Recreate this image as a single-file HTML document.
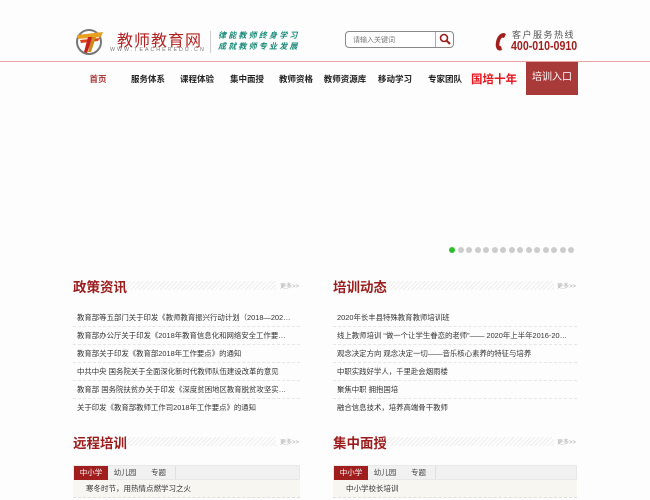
<!DOCTYPE html>
<html><head><meta charset="utf-8"><style>
*{margin:0;padding:0;box-sizing:border-box}
body{width:650px;height:500px;overflow:hidden;background:#fdfdfd;font-family:"Liberation Sans","Noto Sans CJK SC",sans-serif;position:relative;color:#333}
.a{position:absolute;white-space:nowrap}
.nav{position:absolute;top:73px;font-size:8.5px;font-weight:bold;color:#222;transform:translateX(-50%);white-space:nowrap}
.h2{position:absolute;font-size:13.5px;font-weight:bold;color:#9b1c1c}
.hatch{position:absolute;height:9px;background:repeating-linear-gradient(135deg,#eee 0 1px,#fdfdfd 1px 3px)}
.more{position:absolute;font-size:6px;color:#aaa}
.li{position:absolute;font-size:7.4px;color:#333;height:18px;line-height:18px;border-bottom:1px dashed #e6e6e6;padding-left:4px;padding-right:8px;overflow:hidden;text-overflow:ellipsis;white-space:nowrap}
.dot{position:absolute;top:247px;width:6px;height:6px;border-radius:50%;background:#ccc}
.tabs{position:absolute;top:465px;height:15px;background:#f1f1f1;border:1px solid #e8e8e8}
.tab{position:absolute;top:0;height:14px;line-height:14px;font-size:7.5px;text-align:center;width:34px;color:#444}
.tab.on{background:#a01e1e;color:#fff}
.row{position:absolute;top:480px;height:18px;line-height:18px;background:#f8f6f1;font-size:7.5px;padding-left:13px;border-bottom:1px dashed #e0e0e0}
</style></head><body>
<svg class="a" style="left:75px;top:28px" width="30" height="28" viewBox="0 0 30 28">
<circle cx="14" cy="14" r="12" fill="none" stroke="#777" stroke-width="2"/>
<path d="M2 7 L28 4 L26 9 L3 11 Z" fill="#e8a020"/>
<path d="M5 12 L25 10 L23 13 L6 15Z" fill="#d9461e"/>
<path d="M13 9 L18 9 L12 25 L9 24Z" fill="#c62020"/>
<path d="M17 9 L21 9 L16 24 L13 24Z" fill="#d08a1a"/>
</svg>
<div class="a" style="left:117px;top:27px;font-size:16px;color:#b22222;letter-spacing:1px">教师教育网</div>
<div class="a" style="left:110px;top:47px;font-size:5.3px;color:#777;letter-spacing:2px">WWW.TEACHEREDU.CN</div>
<div class="a" style="left:210px;top:31px;width:1px;height:22px;background:#ccc"></div>
<div class="a" style="left:218px;top:30px;font-size:8px;color:#1a8a7a;font-weight:bold;letter-spacing:2.2px;font-style:italic;line-height:11px">律能教师终身学习<br>成就教师专业发展</div>
<div class="a" style="left:345px;top:31px;width:109px;height:17px;border:1px solid #888;border-radius:4px;background:#fff"></div>
<div class="a" style="left:353px;top:35px;font-size:7px;color:#777">请输入关键词</div>
<div class="a" style="left:435px;top:32px;width:1px;height:15px;background:#aaa"></div>
<svg class="a" style="left:439px;top:33px" width="12" height="12" viewBox="0 0 12 12"><circle cx="5" cy="5" r="3.5" fill="none" stroke="#9b1c1c" stroke-width="1.6"/><path d="M7.5 7.5 L11 11" stroke="#9b1c1c" stroke-width="2"/></svg>
<svg class="a" style="left:493px;top:31px" width="16" height="22" viewBox="0 0 16 22"><path d="M11 2 C5 2 2 10 3 16 C4 20 7 20 9 19 L8 15 C6 16 6 13 7 10 C8 7 9 6 11 7 L13 3Z" fill="#a01e1e"/></svg>
<div class="a" style="left:512px;top:28px;font-size:9px;color:#555;letter-spacing:1.5px">客户服务热线</div>
<div class="a" style="left:511px;top:39px;font-size:12.5px;font-weight:bold;color:#a01e1e;transform:scaleX(0.85);transform-origin:left">400-010-0910</div>
<div class="a" style="left:0;top:61px;width:650px;height:1px;background:#e8a0a0"></div>
<div class="nav" style="left:98px;color:#a83a3a">首页</div>
<div class="nav" style="left:148px">服务体系</div>
<div class="nav" style="left:197px">课程体验</div>
<div class="nav" style="left:247px">集中面授</div>
<div class="nav" style="left:296px">教师资格</div>
<div class="nav" style="left:345px">教师资源库</div>
<div class="nav" style="left:395px">移动学习</div>
<div class="nav" style="left:445px">专家团队</div>
<div class="nav" style="left:494px;top:71px;font-size:11.5px;color:#e8141c">国培十年</div>
<div class="a" style="left:526px;top:62px;width:52px;height:33px;background:#a83a3a;color:#fff;font-size:10px;text-align:center;line-height:31px">培训入口</div>
<div class="dot" style="left:449px;background:#2bbf2b"></div>
<div class="dot" style="left:457.5px"></div><div class="dot" style="left:466px"></div><div class="dot" style="left:474.5px"></div><div class="dot" style="left:483px"></div><div class="dot" style="left:491.5px"></div><div class="dot" style="left:500px"></div><div class="dot" style="left:508.5px"></div><div class="dot" style="left:517px"></div><div class="dot" style="left:525.5px"></div><div class="dot" style="left:534px"></div><div class="dot" style="left:542.5px"></div><div class="dot" style="left:551px"></div><div class="dot" style="left:559.5px"></div><div class="dot" style="left:568px"></div>
<div class="h2" style="left:73px;top:276px">政策资讯</div><div class="hatch" style="left:126px;top:281px;width:150px"></div><div class="more" style="left:280px;top:281px">更多>></div>
<div class="h2" style="left:333px;top:276px">培训动态</div><div class="hatch" style="left:386px;top:281px;width:168px"></div><div class="more" style="left:557px;top:281px">更多>></div>
<div class="li" style="left:73px;top:309px;width:227px">教育部等五部门关于印发《教师教育振兴行动计划（2018—2022年）》的通知</div>
<div class="li" style="left:73px;top:327px;width:227px">教育部办公厅关于印发《2018年教育信息化和网络安全工作要点》的通知</div>
<div class="li" style="left:73px;top:345px;width:227px">教育部关于印发《教育部2018年工作要点》的通知</div>
<div class="li" style="left:73px;top:363px;width:227px">中共中央 国务院关于全面深化新时代教师队伍建设改革的意见</div>
<div class="li" style="left:73px;top:381px;width:227px">教育部 国务院扶贫办关于印发《深度贫困地区教育脱贫攻坚实施方案》</div>
<div class="li" style="left:73px;top:399px;width:227px;border:0">关于印发《教育部教师工作司2018年工作要点》的通知</div>
<div class="li" style="left:333px;top:309px;width:244px">2020年长丰县特殊教育教师培训班</div>
<div class="li" style="left:333px;top:327px;width:244px">线上教师培训 “做一个让学生眷恋的老师”—— 2020年上半年2016-2018年教师培训</div>
<div class="li" style="left:333px;top:345px;width:244px">观念决定方向 观念决定一切——音乐核心素养的特征与培养</div>
<div class="li" style="left:333px;top:363px;width:244px">中职实践好学人，千里赴会烟雨楼</div>
<div class="li" style="left:333px;top:381px;width:244px">聚焦中职 拥抱国培</div>
<div class="li" style="left:333px;top:399px;width:244px;border:0">融合信息技术，培养高端骨干教师</div>
<div class="h2" style="left:73px;top:432px">远程培训</div><div class="hatch" style="left:126px;top:437px;width:150px"></div><div class="more" style="left:280px;top:437px">更多>></div>
<div class="h2" style="left:333px;top:432px">集中面授</div><div class="hatch" style="left:386px;top:437px;width:168px"></div><div class="more" style="left:557px;top:437px">更多>></div>
<div class="tabs" style="left:73px;width:227px"><div class="tab on" style="left:0">中小学</div><div class="tab" style="left:34px">幼儿园</div><div class="tab" style="left:68px;border-right:1px solid #e0e0e0">专题</div></div>
<div class="row" style="left:73px;width:227px">寒冬时节，用热情点燃学习之火</div>
<div class="tabs" style="left:333px;width:244px"><div class="tab on" style="left:0">中小学</div><div class="tab" style="left:34px">幼儿园</div><div class="tab" style="left:68px;border-right:1px solid #e0e0e0">专题</div></div>
<div class="row" style="left:333px;width:244px">中小学校长培训</div>
</body></html>
